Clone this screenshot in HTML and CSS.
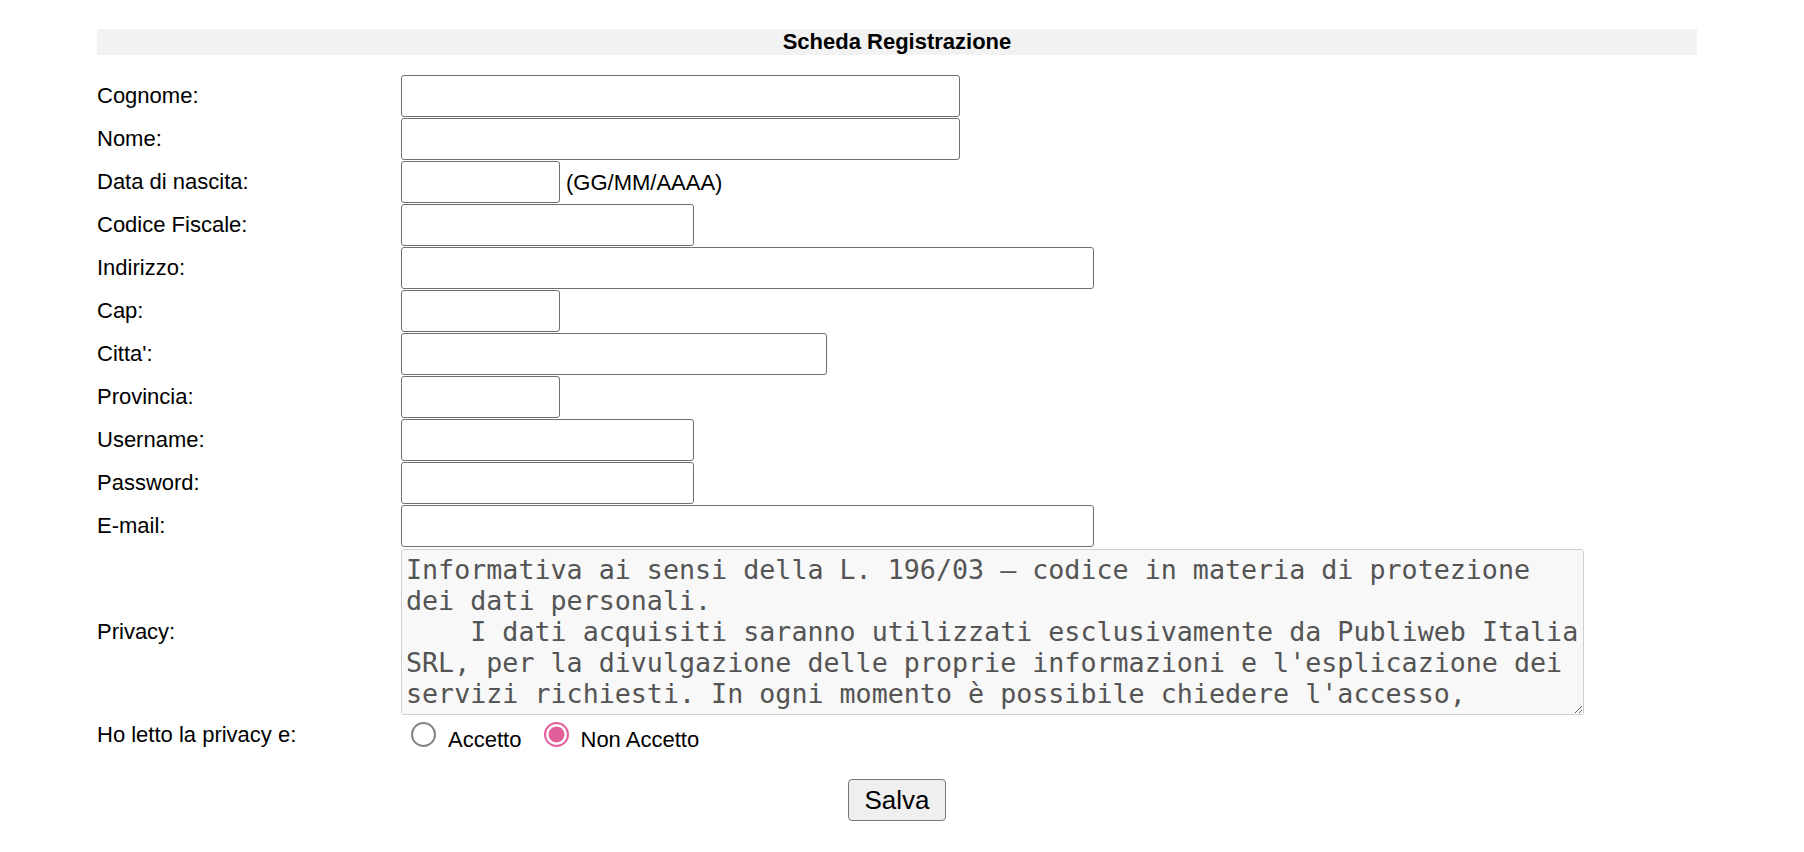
FILE: index.html
```html
<!DOCTYPE html>
<html lang="it">
<head>
<meta charset="utf-8">
<title>Scheda Registrazione</title>
<link rel="stylesheet" href="styles.css">
</head>
<body>
<div class="sheet">
  <div class="title">Scheda Registrazione</div>
  <form class="form">
    <label class="lbl" for="cognome">Cognome:</label>
    <div class="field"><input class="in w4" id="cognome" type="text"></div>

    <label class="lbl" for="nome">Nome:</label>
    <div class="field"><input class="in w4" id="nome" type="text"></div>

    <label class="lbl" for="nascita">Data di nascita:</label>
    <div class="field"><input class="in w1" id="nascita" type="text"><span class="hint">(GG/MM/AAAA)</span></div>

    <label class="lbl" for="cf">Codice Fiscale:</label>
    <div class="field"><input class="in w2" id="cf" type="text"></div>

    <label class="lbl" for="indirizzo">Indirizzo:</label>
    <div class="field"><input class="in w5" id="indirizzo" type="text"></div>

    <label class="lbl" for="cap">Cap:</label>
    <div class="field"><input class="in w1" id="cap" type="text"></div>

    <label class="lbl" for="citta">Citta':</label>
    <div class="field"><input class="in w3" id="citta" type="text"></div>

    <label class="lbl" for="provincia">Provincia:</label>
    <div class="field"><input class="in w1" id="provincia" type="text"></div>

    <label class="lbl" for="username">Username:</label>
    <div class="field"><input class="in w2" id="username" type="text"></div>

    <label class="lbl" for="password">Password:</label>
    <div class="field"><input class="in w2" id="password" type="password"></div>

    <label class="lbl" for="email">E-mail:</label>
    <div class="field"><input class="in w5" id="email" type="text"></div>

    <label class="lbl lbl-privacy" for="privacy">Privacy:</label>
    <div class="field field-privacy"><textarea class="privacy" id="privacy" readonly>Informativa ai sensi della L. 196/03 – codice in materia di protezione dei dati personali.
    I dati acquisiti saranno utilizzati esclusivamente da Publiweb Italia SRL, per la divulgazione delle proprie informazioni e l'esplicazione dei servizi richiesti. In ogni momento è possibile chiedere l'accesso, l'aggiornamento, la rettifica o la cancellazione dei propri dati scrivendo a Publiweb Italia SRL.</textarea></div>

    <label class="lbl lbl-radio">Ho letto la privacy e:</label>
    <div class="field-radio">
      <label class="opt"><input class="radio" type="radio" name="privacy_ok" value="1"><span class="opt-text">Accetto</span></label>
      <label class="opt"><input class="radio" type="radio" name="privacy_ok" value="0" checked><span class="opt-text">Non Accetto</span></label>
    </div>
  </form>
  <div class="actions"><button class="btn" type="button">Salva</button></div>
</div>
</body>
</html>
```

FILE: styles.css
```css
html, body {
  margin: 0;
  padding: 0;
  background: #fff;
}

body {
  padding: 8px;
  font-family: "Liberation Sans", Arial, sans-serif;
  font-size: 22px;
  color: #000;
}

.sheet {
  width: 1600px;
  margin: 21px 0 0 89px;
}

.title {
  height: 26px;
  line-height: 26px;
  background: #f2f2f2;
  text-align: center;
  font-weight: bold;
  font-size: 22px;
}

.form {
  display: grid;
  grid-template-columns: 304px 1fr;
  grid-template-rows: repeat(11, 43px) 168px 38px;
  margin: 19px 0 0 0;
}

.lbl {
  align-self: center;
  line-height: 25px;
  white-space: nowrap;
}

.field {
  display: flex;
  align-items: flex-start;
}

.in {
  box-sizing: border-box;
  height: 42px;
  margin: 1px 0 0 0;
  padding: 1px 6px;
  border: 1px solid #6f6f6f;
  border-radius: 3px;
  background: #fff;
  font-family: "Liberation Sans", Arial, sans-serif;
  font-size: 22px;
  outline: none;
}

.w1 { width: 159px; }
.w2 { width: 293px; }
.w3 { width: 426px; }
.w4 { width: 559px; }
.w5 { width: 693px; }

.hint {
  margin-left: 6px;
  align-self: center;
  margin-top: 2px;
  line-height: 25px;
}

.field-privacy {
  height: 168px;
}

.lbl-privacy {
  box-sizing: border-box;
  display: flex;
  align-items: center;
  align-self: start;
  height: 168px;
  padding-top: 1px;
}

.privacy {
  box-sizing: border-box;
  width: 1183px;
  height: 166px;
  margin: 2px 0 0 0;
  padding: 4px 0 5px 4px;
  border: 1px solid #cfcfcf;
  border-radius: 3px;
  background: #f8f8f8;
  color: #545454;
  font-family: "DejaVu Sans Mono", "Liberation Mono", monospace;
  font-size: 26.68px;
  line-height: 31px;
  resize: both;
  scrollbar-width: none;
  outline: none;
}

.lbl-radio {
  align-self: center;
}

.field-radio {
  box-sizing: border-box;
  height: 38px;
  padding: 7px 0 0 10px;
  line-height: 25px;
  white-space: nowrap;
}

.opt {
  display: inline-block;
  margin-right: 16px;
}

.radio {
  -webkit-appearance: none;
  appearance: none;
  box-sizing: border-box;
  display: inline-block;
  width: 25px;
  height: 25px;
  margin: 0;
  border: 2px solid #858585;
  border-radius: 50%;
  background: #fff;
  vertical-align: baseline;
}

.radio:checked {
  border-color: #e35f9c;
  background: radial-gradient(circle, #e35f9c 0 7.5px, #fff 8.3px);
}

.opt-text {
  margin-left: 12px;
}

.actions {
  display: flex;
  justify-content: center;
  margin-top: 26px;
}

.btn {
  box-sizing: border-box;
  height: 42px;
  padding: 0 15px;
  border: 1px solid #767676;
  border-radius: 4px;
  background: #efefef;
  color: #000;
  font-family: "Liberation Sans", Arial, sans-serif;
  font-size: 26px;
  line-height: 38px;
}
```
